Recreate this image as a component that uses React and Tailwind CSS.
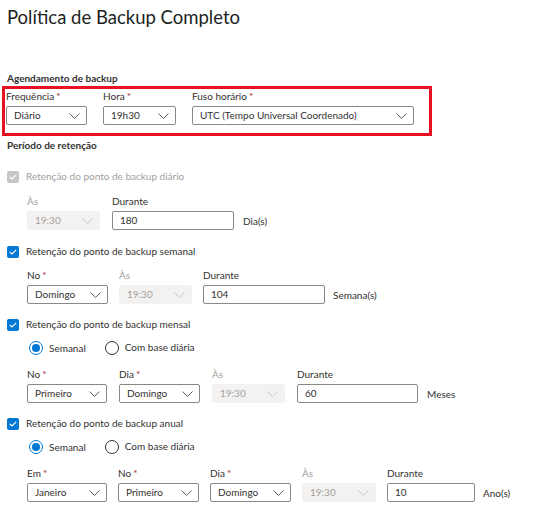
import { useState } from "react";

const Chevron = ({ disabled }) => (
  <svg width="11" height="6" viewBox="0 0 11 6" className="shrink-0">
    <path
      d="M0.5 0.5 L5.5 5.5 L10.5 0.5"
      fill="none"
      stroke={disabled ? "#c8c6c4" : "#605e5c"}
      strokeWidth="1"
    />
  </svg>
);

// label de campo com asterisco opcional
const Label = ({ children, required, disabled }) => (
  <div
    className={`h-[15px] leading-[15px] text-[10px] ${
      disabled ? "text-[#a19f9d]" : "text-[#323130]"
    }`}
  >
    {children}
    {required && <span className="text-[#a4262c] ml-[2px]">*</span>}
  </div>
);

const Select = ({ value, width, disabled }) => (
  <div
    className={`h-[19px] flex items-center justify-between pl-[7px] pr-[6px] text-[10px] rounded-[2px] ${
      disabled
        ? "bg-[#f3f2f1] text-[#a19f9d] border border-[#f3f2f1]"
        : "bg-white text-[#323130] border border-[#8a8886]"
    }`}
    style={{ width }}
  >
    <span>{value}</span>
    <Chevron disabled={disabled} />
  </div>
);

const Input = ({ value, width }) => (
  <div
    className="h-[19px] flex items-center pl-[7px] text-[10px] text-[#323130] bg-white border border-[#8a8886] rounded-[2px]"
    style={{ width }}
  >
    {value}
  </div>
);

const Field = ({ label, required, disabled, children }) => (
  <div className="flex flex-col gap-[2px]">
    <Label required={required} disabled={disabled}>
      {label}
    </Label>
    {children}
  </div>
);

const Checkbox = ({ label, disabled }) => (
  <div className="h-[15px] flex items-center gap-[7px]">
    <div
      className={`w-[12px] h-[12px] rounded-[2px] flex items-center justify-center ${
        disabled ? "bg-[#c8c6c4]" : "bg-[#0078d4]"
      }`}
    >
      <svg width="8" height="6" viewBox="0 0 8 6">
        <path d="M0.8 3 L3 5 L7.2 0.8" fill="none" stroke="white" strokeWidth="1.1" />
      </svg>
    </div>
    <span
      className={`text-[10px] ${disabled ? "text-[#a19f9d]" : "text-[#323130]"}`}
    >
      {label}
    </span>
  </div>
);

const RadioRow = () => (
  <div className="h-[15px] flex items-center pl-[22px] text-[10px] text-[#323130]">
    <div className="w-[14px] h-[14px] rounded-full border border-[#0078d4] flex items-center justify-center">
      <div className="w-[8px] h-[8px] rounded-full bg-[#0078d4]" />
    </div>
    <span className="ml-[6px] mt-[2px]">Semanal</span>
    <div className="ml-[19px] w-[14px] h-[14px] rounded-full border border-[#323130]" />
    <span className="ml-[6px]">Com base diária</span>
  </div>
);

const Unit = ({ children }) => (
  <span className="self-end -ml-[3px] text-[10px] text-[#323130] h-[19px] leading-[21px]">
    {children}
  </span>
);

export default function App() {
  const [tz] = useState("UTC (Tempo Universal Coordenado)");

  return (
    <div
      className="w-[545px] h-[506px] bg-white px-[7px] overflow-hidden"
      style={{ fontFamily: 'Lato, "Noto Sans", sans-serif' }}
    >
      <h1 className="pt-[3px] h-[30px] text-[18.5px] leading-[28px] text-[#201f1e] font-normal">
        Política de Backup Completo
      </h1>

      {/* Agendamento */}
      <div className="mt-[41px] h-[15px] leading-[15px] text-[10px] font-bold text-[#323130]">
        Agendamento de backup
      </div>
      <div className="-ml-[5px] w-[430px] h-[50px] border-[3px] border-[#e81123] pl-[1px] flex gap-[16px]">
        <Field label="Frequência" required>
          <Select value="Diário" width={81} />
        </Field>
        <Field label="Hora" required>
          <Select value="19h30" width={73} />
        </Field>
        <Field label="Fuso horário" required>
          <Select value={tz} width={222} />
        </Field>
      </div>

      {/* Retenção */}
      <div className="mt-[2px] h-[15px] leading-[15px] text-[10px] font-bold text-[#323130]">
        Período de retenção
      </div>

      <div className="mt-[16px]">
        <Checkbox label="Retenção do ponto de backup diário" disabled />
      </div>
      <div className="mt-[10px] pl-[20px] flex gap-[12px]">
        <Field label="Às" disabled>
          <Select value="19:30" width={73} disabled />
        </Field>
        <Field label="Durante">
          <Input value="180" width={122} />
        </Field>
        <Unit>Dia(s)</Unit>
      </div>

      <div className="mt-[14px]">
        <Checkbox label="Retenção do ponto de backup semanal" />
      </div>
      <div className="mt-[9px] pl-[20px] flex gap-[11px]">
        <Field label="No" required>
          <Select value="Domingo" width={81} />
        </Field>
        <Field label="Às" disabled>
          <Select value="19:30" width={73} disabled />
        </Field>
        <Field label="Durante">
          <Input value="104" width={122} />
        </Field>
        <Unit>Semana(s)</Unit>
      </div>

      <div className="mt-[13px]">
        <Checkbox label="Retenção do ponto de backup mensal" />
      </div>
      <div className="mt-[8px]">
        <RadioRow />
      </div>
      <div className="mt-[12px] pl-[20px] flex gap-[12px]">
        <Field label="No" required>
          <Select value="Primeiro" width={80} />
        </Field>
        <Field label="Dia" required>
          <Select value="Domingo" width={81} />
        </Field>
        <Field label="Às" disabled>
          <Select value="19:30" width={73} disabled />
        </Field>
        <Field label="Durante">
          <Input value="60" width={121} />
        </Field>
        <Unit>Meses</Unit>
      </div>

      <div className="mt-[13px]">
        <Checkbox label="Retenção do ponto de backup anual" />
      </div>
      <div className="mt-[8px]">
        <RadioRow />
      </div>
      <div className="mt-[12px] pl-[20px] flex gap-[11px]">
        <Field label="Em" required>
          <Select value="Janeiro" width={80} />
        </Field>
        <Field label="No" required>
          <Select value="Primeiro" width={81} />
        </Field>
        <Field label="Dia" required>
          <Select value="Domingo" width={81} />
        </Field>
        <Field label="Às" disabled>
          <Select value="19:30" width={74} disabled />
        </Field>
        <Field label="Durante">
          <Input value="10" width={88} />
        </Field>
        <Unit>Ano(s)</Unit>
      </div>
    </div>
  );
}
